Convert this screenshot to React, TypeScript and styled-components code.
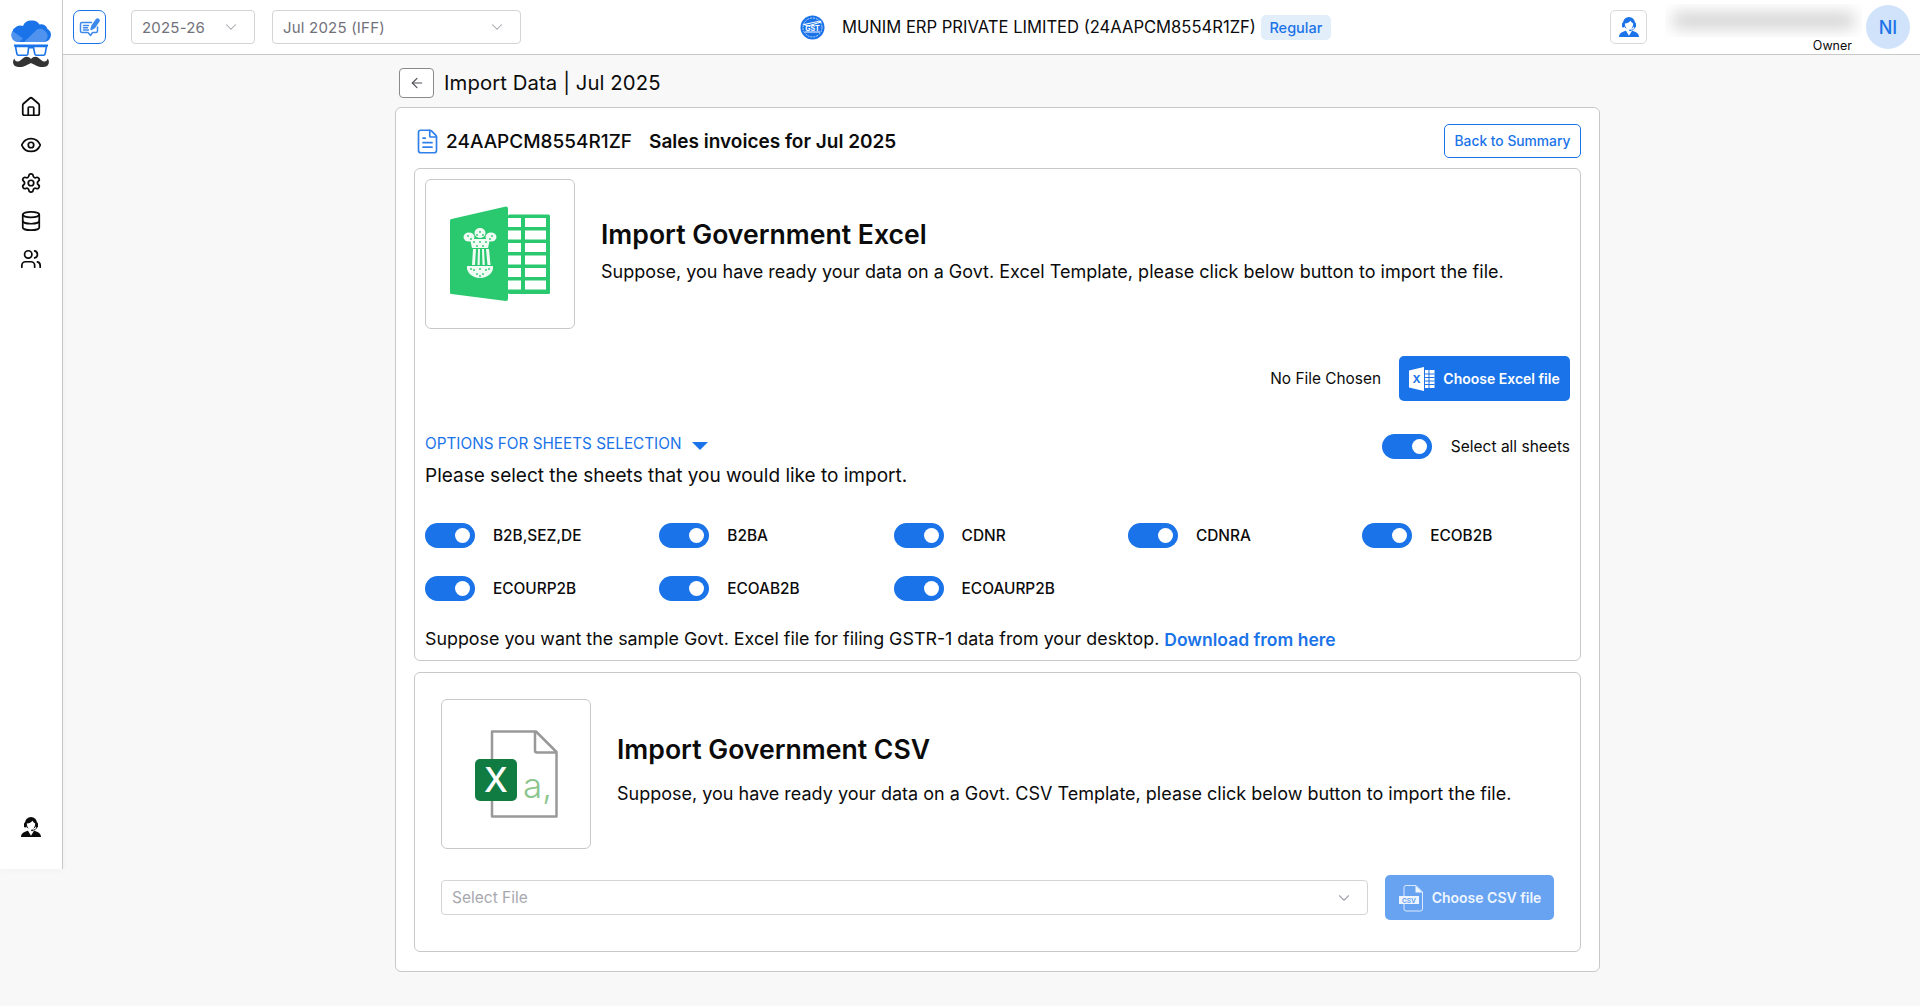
import React from "react";
import styled, { createGlobalStyle } from "styled-components";
import { House, Eye, Settings, Database, Users, FileText, ArrowLeft, ChevronDown } from "lucide-react";

const Global = createGlobalStyle`
  html, body { margin: 0; padding: 0; background: #f8f8f8; }
  body { font-family: Inter, "Liberation Sans", sans-serif; color: #0b0b0b; }
  * { box-sizing: border-box; }
`;

const Page = styled.div`
  display: flex;
  align-items: flex-start;
  width: 1920px;
  height: 1006px;
  overflow: hidden;
`;

const Sidebar = styled.aside`
  width: 63px;
  height: 869px;
  flex: none;
  background: #fff;
  border-right: 1px solid #c8c8c8;
  box-shadow: 0 0 8px rgba(0, 0, 0, 0.04);
  display: flex;
  flex-direction: column;
  align-items: center;
  padding: 20px 0 30px;
`;

const NavList = styled.nav`
  display: flex;
  flex-direction: column;
  align-items: center;
  gap: 16px;
  margin-top: 28px;
  flex: 1;
  color: #0b0b0b;
`;

const Main = styled.div`
  flex: 1;
  min-width: 0;
  display: flex;
  flex-direction: column;
`;

const Header = styled.header`
  height: 55px;
  background: #fff;
  border-bottom: 1px solid #c8c8c8;
  display: flex;
  align-items: center;
  padding: 0 10px;
`;

const IconButton = styled.button<{ $accent?: boolean }>`
  width: ${(p) => (p.$accent ? 33 : 37)}px;
  height: 34px;
  padding: 0;
  flex: none;
  background: #fff;
  border: 1px solid ${(p) => (p.$accent ? "#1a73e8" : "#d9d9de")};
  border-radius: ${(p) => (p.$accent ? 7 : 5)}px;
  display: flex;
  align-items: center;
  justify-content: center;
`;

const HeaderSelect = styled.div<{ $w: number; $ml: number }>`
  width: ${(p) => p.$w}px;
  margin-left: ${(p) => p.$ml}px;
  height: 34px;
  flex: none;
  border: 1px solid #d4d4d8;
  border-radius: 4px;
  display: flex;
  align-items: center;
  justify-content: space-between;
  padding: 0 14px 0 10px;
  font-size: 15px;
  letter-spacing: 0.2px;
  color: #71717a;
`;

const CompanyBlock = styled.div`
  display: flex;
  align-items: center;
  margin-left: 279px;
`;

const CompanyName = styled.span`
  font-size: 16.58px;
  margin-left: 17px;
  white-space: nowrap;
`;

const Badge = styled.span`
  margin-left: 5px;
  width: 70px;
  height: 25px;
  border-radius: 5px;
  background: #e3eefb;
  color: #1a73e8;
  font-size: 14.5px;
  font-weight: 500;
  display: flex;
  align-items: center;
  justify-content: center;
`;

const UserArea = styled.div`
  margin-left: auto;
  display: flex;
  align-items: center;
`;

const UserMeta = styled.div`
  width: 197px;
  margin-left: 18px;
  display: flex;
  flex-direction: column;
  align-items: flex-end;
  align-self: flex-start;
`;

const BlurBox = styled.div`
  width: 197px;
  height: 33px;
  margin-top: 2px;
  overflow: hidden;
  padding: 9px 8px;
`;

const BlurInner = styled.div`
  width: 100%;
  height: 15px;
  background: #cfcfcf;
  filter: blur(8px);
`;

const Role = styled.span`
  font-size: 12.5px;
  margin-top: 1px;
  padding-right: 10px;
`;

const Avatar = styled.div`
  width: 44px;
  height: 44px;
  margin-left: 4px;
  border-radius: 50%;
  background: #d1e3fa;
  color: #1a73e8;
  font-size: 18px;
  font-weight: 500;
  display: flex;
  align-items: center;
  justify-content: center;
`;

const Content = styled.main`
  width: 1205px;
  margin-left: 332px;
  display: flex;
  flex-direction: column;
`;

const TitleRow = styled.div`
  height: 52px;
  padding: 13px 0 0 4px;
  display: flex;
  align-items: flex-start;
`;

const BackButton = styled.button`
  width: 35px;
  height: 30px;
  padding: 0;
  background: #fff;
  border: 1px solid #8a8a8a;
  border-radius: 4px;
  display: flex;
  align-items: center;
  justify-content: center;
  color: #52525b;
`;

const PageTitle = styled.h1`
  margin: 0 0 0 10px;
  font-size: 20.3px;
  line-height: 30px;
  font-weight: 400;
  letter-spacing: 0.1px;
`;

const Card = styled.section`
  height: 865px;
  background: #fff;
  border: 1px solid #c8c8c8;
  border-radius: 6px;
  padding: 0 18px 0 18px;
  display: flex;
  flex-direction: column;
`;

const CardHead = styled.div`
  height: 60px;
  display: flex;
  align-items: center;
  padding-top: 6px;
`;

const Gstin = styled.span`
  font-size: 19px;
  font-weight: 500;
  margin-left: 5px;
`;

const CardTitle = styled.span`
  font-size: 19px;
  font-weight: 600;
  margin-left: 17px;
`;

const OutlineButton = styled.button`
  margin-left: auto;
  width: 137px;
  height: 34px;
  background: #fff;
  border: 1px solid #1a73e8;
  border-radius: 5px;
  color: #1a73e8;
  font: 500 13.8px Inter, sans-serif;
  padding: 0;
`;

const Panel = styled.div<{ $h: number; $mt?: number }>`
  height: ${(p) => p.$h}px;
  margin-top: ${(p) => p.$mt ?? 0}px;
  border: 1px solid #c8c8c8;
  border-radius: 6px;
  display: flex;
  flex-direction: column;
`;

const Intro = styled.div<{ $pad: string }>`
  display: flex;
  align-items: center;
  padding: ${(p) => p.$pad};
  gap: 26px;
`;

const IntroText = styled.div<{ $paraGap: number; $bottom: number }>`
  padding-bottom: ${(p) => p.$bottom}px;
  & > p {
    margin-top: ${(p) => p.$paraGap}px;
  }
`;

const ImageBox = styled.div`
  width: 150px;
  height: 150px;
  flex: none;
  border: 1px solid #c8c8c8;
  border-radius: 6px;
  display: flex;
  align-items: center;
  justify-content: center;
`;

const Heading = styled.h2`
  margin: 0;
  font-size: 26.6px;
  line-height: 30px;
  font-weight: 600;
`;

const Para = styled.p`
  margin: 0;
  font-size: 18px;
  line-height: 24px;
  white-space: nowrap;
`;

const ChooseRow = styled.div`
  display: flex;
  justify-content: flex-end;
  align-items: center;
  gap: 18px;
  padding: 27px 10px 0 0;
  font-size: 15.4px;
`;

const FileButton = styled.button<{ $muted?: boolean; $w: number }>`
  width: ${(p) => p.$w}px;
  height: 45px;
  border: 0;
  border-radius: 5px;
  padding: 0;
  flex: none;
  background: ${(p) => (p.$muted ? "#68a3f2" : "#1a73e8")};
  color: ${(p) => (p.$muted ? "#eef5fe" : "#fff")};
  font: 600 14px Inter, sans-serif;
  display: flex;
  align-items: center;
  justify-content: center;
  gap: 8px;
`;

const OptionsHead = styled.div`
  display: flex;
  justify-content: space-between;
  align-items: center;
  padding: 24px 10px 0 10px;
  height: 66px;
`;

const OptionsLabel = styled.div`
  display: flex;
  align-items: center;
  gap: 11px;
  color: #1a73e8;
  font-size: 15.3px;
  margin-top: -6px;
`;

const Caret = styled.span`
  width: 0;
  height: 0;
  margin-top: 5px;
  border-left: 8.5px solid transparent;
  border-right: 8.5px solid transparent;
  border-top: 8.5px solid #1a73e8;
`;

const ToggleLabel = styled.label<{ $gap: number; $weight?: number; $size?: number }>`
  display: flex;
  align-items: center;
  gap: ${(p) => p.$gap}px;
  font-size: ${(p) => p.$size ?? 15.4}px;
  font-weight: ${(p) => p.$weight ?? 400};
`;

const Toggle = styled.span`
  width: 50px;
  height: 25px;
  flex: none;
  border-radius: 13px;
  background: #1a73e8;
  position: relative;
  &::after {
    content: "";
    position: absolute;
    right: 5px;
    top: 5px;
    width: 15px;
    height: 15px;
    border-radius: 50%;
    background: #fff;
  }
`;

const SheetIntro = styled.p`
  margin: -3px 0 0;
  padding: 0 0 0 10px;
  font-size: 19px;
  line-height: 24px;
`;

const SheetGrid = styled.div`
  display: grid;
  grid-template-columns: repeat(5, 234.3px);
  grid-auto-rows: 25px;
  row-gap: 28px;
  padding: 35px 0 0 10px;
`;

const SampleRow = styled.p`
  margin: 26px 0 0;
  padding-left: 10px;
  font-size: 17.85px;
  line-height: 24px;
  white-space: nowrap;
`;

const Link = styled.a`
  color: #1a73e8;
  font-size: 17.5px;
  font-weight: 600;
  margin-left: 5px;
  position: relative;
  top: 1px;
`;

const CsvActions = styled.div`
  display: flex;
  align-items: center;
  gap: 17px;
  padding: 26px 26px 0;
`;

const FileSelect = styled.div`
  flex: 1;
  height: 35px;
  border: 1px solid #d4d4d8;
  border-radius: 4px;
  display: flex;
  align-items: center;
  justify-content: space-between;
  padding: 0 14px 0 10px;
  color: #a8a8ae;
  font-size: 15.5px;
`;

const Logo = () => (
  <svg width="40" height="48" viewBox="0 0 40 48">
    <path d="M7 22h26a7 7 0 0 0 3.500-13 6.500 6.500 0 0 0-8-4.500A8.500 8.500 0 0 0 20 .5a8.500 8.500 0 0 0-8 5.500A7 7 0 0 0 7 22z" fill="#1a73e8" />
    <path d="M13 22 26 9.500a7 7 0 0 1 8 1.500 6.500 6.500 0 0 1-1 11z" fill="#4f93ee" />
    <path d="M1.500 11 12 18.500 8 22H7a7 7 0 0 1-5.500-11z" fill="#4f93ee" />
    <path d="M4.500 26.500h13.200l-.8 7.300a1.600 1.600 0 0 1-1.600 1.400H7.500a1.600 1.600 0 0 1-1.600-1.400zM22.300 26.500h13.200l-1.400 7.300a1.600 1.600 0 0 1-1.600 1.400h-7.100a1.600 1.600 0 0 1-1.600-1.400z" fill="#fff" stroke="#1a73e8" strokeWidth="1.600" />
    <path d="M3 25.500h34M17 27.500h6" stroke="#1a73e8" strokeWidth="2" />
    <path d="M20 39C18 36.500 15 36 13 37.500 10 39.500 8.500 42 6 41.500 4.500 41.200 3.500 40 3.500 38.500 1.500 40.500 1.500 44 4 46 7.500 48 13 47 16 45 18 43.800 19.500 43.200 20 43.200 20.500 43.200 22 43.800 24 45 27 47 32.500 48 36 46 38.500 44 38.500 40.500 36.500 38.500 36.500 40 35.500 41.200 34 41.500 31.500 42 30 39.500 27 37.500 25 36 22 36.500 20 39z" fill="#333" />
  </svg>
);

const NoteIcon = () => (
  <svg width="24" height="24" viewBox="0 0 24 24" fill="none" stroke="#3d8aec" strokeWidth="1.500" strokeLinejoin="round" strokeLinecap="round">
    <path d="M13.500 7.500H4a1.500 1.500 0 0 0-1.500 1.500v7A1.500 1.500 0 0 0 4 17.500h6l2.500 3 2-3h3.500A1.500 1.500 0 0 0 19.500 16v-4" />
    <path d="M5.500 10.500h5M5.500 12.800h4M5.500 15h5" />
    <path d="M13 14.500l1-3.500 4.500-6.500c.8-.8 3-.3 2.500 1.500l-4.500 6.500z" fill="#3d8aec" />
  </svg>
);

const Support = ({ color }: { color: string }) => (
  <svg width="24" height="24" viewBox="0 0 24 24" fill={color}>
    <circle cx="12" cy="8" r="6" />
    <rect x="5" y="7.500" width="2.400" height="5" rx="1.200" />
    <rect x="16.600" y="7.500" width="2.400" height="5" rx="1.200" />
    <path d="M7.800 8.500c2.500-.2 4.500-1 5.700-2.700.8 1.300 1.700 2.200 2.700 2.700 0 3-1.800 6-4.200 6s-4.200-3-4.200-6z" fill="#fff" />
    <path d="M17.800 12c-.3 2-2 3.300-4.600 3.300" fill="none" stroke={color} strokeWidth="0.900" />
    <circle cx="13" cy="15.300" r="0.900" />
    <path d="M9 15.800l3 5 3-5c3 .7 6.500 2 7 5.700v.5H2v-.5c.5-3.700 4-5 7-5.700z" />
  </svg>
);

const GstSeal = () => (
  <svg width="25" height="25" viewBox="0 0 25 25">
    <circle cx="12.500" cy="12.500" r="12" fill="#1a73e8" />
    <circle cx="12.500" cy="12.500" r="9.500" fill="none" stroke="#fff" strokeWidth="0.700" strokeDasharray="2 1" />
    <path d="M4 9.500 20 6l1 1-13 4zM5 17h15" stroke="#fff" strokeWidth="1.100" fill="none" />
    <text x="12.500" y="15.500" fontSize="7" fontWeight="700" fill="#fff" textAnchor="middle" fontFamily="Inter, sans-serif">GST</text>
  </svg>
);

const speckles = [
  [30, 26], [27, 29], [33, 29], [18, 30], [21, 33], [40, 33], [42, 30], [24, 36], [30, 36], [36, 36],
  [27, 40], [33, 40], [24, 64], [30, 63], [36, 64], [21, 63], [39, 63], [27, 68], [33, 68], [30, 70],
];

const Emblem = () => (
  <g fill="#fff" opacity="0.93">
    <ellipse cx="30" cy="27" rx="5.500" ry="5" />
    <ellipse cx="19" cy="31" rx="5.500" ry="4.500" />
    <ellipse cx="41" cy="31" rx="5.500" ry="4.500" />
    <path d="M20 33h20l-2 9H22z" />
    <path d="M23 43h3l-1 16h-3zM28 43h2l-.3 16h-2.200zM32 43h2l.8 16h-2.300zM36 43h3l1.500 16h-3z" />
    <path d="M17 60h26c1 6-5 12-13 12s-14-6-13-12z" />
    {speckles.map(([x, y]) => (
      <circle key={`${x}-${y}`} cx={x} cy={y} r="0.900" fill="#2ac86f" />
    ))}
  </g>
);

const GovExcel = () => (
  <svg width="100" height="96" viewBox="0 0 100 96">
    <rect x="58" y="8.500" width="42" height="79.500" rx="1.500" fill="#2ac86f" />
    <g fill="#fff">
      {[12, 24.5, 37, 49.5, 62, 74.5].map((y) => (
        <React.Fragment key={y}>
          <rect x="58" y={y} width="13" height="9" />
          <rect x="75" y={y} width="21" height="9" />
        </React.Fragment>
      ))}
    </g>
    <path d="M1.500 13 56 .5a2 2 0 0 1 2 2V93a2 2 0 0 1-2 2L1.500 88a1.500 1.500 0 0 1-1.500-1.500V14.500A1.500 1.500 0 0 1 1.500 13z" fill="#2ac86f" />
    <Emblem />
  </svg>
);

const CsvDoc = () => (
  <svg width="84" height="88" viewBox="0 0 84 88" fill="none">
    <path d="M18 1.500h44L82.500 22v64.500H18z" fill="#fff" stroke="#999" strokeWidth="2.500" strokeLinejoin="round" />
    <path d="M61 1.500v19a2 2 0 0 0 2 2h19" stroke="#999" strokeWidth="2.500" />
    <rect x="1" y="29" width="42" height="42" rx="5" fill="#107c41" />
    <text x="22" y="62" fontSize="34" fontWeight="500" textAnchor="middle" fill="#fff" fontFamily="Inter, sans-serif">X</text>
    <text x="49" y="68" fontSize="35" fontWeight="300" fill="#8cc68f" fontFamily="Inter, sans-serif">a,</text>
  </svg>
);

const ExcelGlyph = () => (
  <svg width="26" height="26" viewBox="0 0 26 26">
    <path d="M0 4.500 15 1v24L0 21.500z" fill="#fff" />
    <text x="7.500" y="17" fontSize="11" fontWeight="700" textAnchor="middle" fill="#1a73e8" fontFamily="Inter, sans-serif">X</text>
    <path d="M16 4h9.500v18H16z" fill="#fff" />
    <path d="M16 8h9.500M16 11.500h9.500M16 15h9.500M16 18.500h9.500M20 4v18" stroke="#1a73e8" strokeWidth="1" />
  </svg>
);

const CsvGlyph = () => (
  <svg width="26" height="28" viewBox="0 0 26 28" fill="none">
    <path d="M6 3.500a2 2 0 0 1 2-2h10l6.500 6.500v17a2 2 0 0 1-2 2H8a2 2 0 0 1-2-2z" stroke="#dbe9fc" strokeWidth="1" />
    <path d="M17.500 1.500 24.500 8.500h-7z" fill="#eef5fe" />
    <rect x="1" y="12" width="20" height="8" fill="#eef5fe" />
    <text x="11" y="18.500" fontSize="6.500" fontWeight="700" textAnchor="middle" fill="#68a3f2" fontFamily="Inter, sans-serif">CSV</text>
  </svg>
);

const sheets = ["B2B,SEZ,DE", "B2BA", "CDNR", "CDNRA", "ECOB2B", "ECOURP2B", "ECOAB2B", "ECOAURP2B"];

export default function App() {
  return (
    <Page>
      <Global />
      <Sidebar>
        <Logo />
        <NavList>
          <House size={22} strokeWidth={1.9} />
          <Eye size={22} strokeWidth={1.9} />
          <Settings size={22} strokeWidth={1.9} />
          <Database size={22} strokeWidth={1.9} />
          <Users size={22} strokeWidth={1.9} />
        </NavList>
        <Support color="#0b0b0b" />
      </Sidebar>
      <Main>
        <Header>
          <IconButton $accent>
            <NoteIcon />
          </IconButton>
          <HeaderSelect $w={124} $ml={25}>
            2025-26
            <ChevronDown size={18} color="#a1a1aa" strokeWidth={1.4} />
          </HeaderSelect>
          <HeaderSelect $w={249} $ml={17}>
            Jul 2025 (IFF)
            <ChevronDown size={18} color="#a1a1aa" strokeWidth={1.4} />
          </HeaderSelect>
          <CompanyBlock>
            <GstSeal />
            <CompanyName>MUNIM ERP PRIVATE LIMITED (24AAPCM8554R1ZF)</CompanyName>
            <Badge>Regular</Badge>
          </CompanyBlock>
          <UserArea>
            <IconButton>
              <Support color="#1a73e8" />
            </IconButton>
            <UserMeta>
              <BlurBox>
                <BlurInner />
              </BlurBox>
              <Role>Owner</Role>
            </UserMeta>
            <Avatar>NI</Avatar>
          </UserArea>
        </Header>
        <Content>
          <TitleRow>
            <BackButton>
              <ArrowLeft size={16} strokeWidth={1.8} />
            </BackButton>
            <PageTitle>Import Data | Jul 2025</PageTitle>
          </TitleRow>
          <Card>
            <CardHead>
              <FileText size={27} color="#2f80ea" strokeWidth={1.5} />
              <Gstin>24AAPCM8554R1ZF</Gstin>
              <CardTitle>Sales invoices for Jul 2025</CardTitle>
              <OutlineButton>Back to Summary</OutlineButton>
            </CardHead>
            <Panel $h={493}>
              <Intro $pad="10px 10px 0">
                <ImageBox>
                  <GovExcel />
                </ImageBox>
                <IntroText $paraGap={11} $bottom={5}>
                  <Heading>Import Government Excel</Heading>
                  <Para>Suppose, you have ready your data on a Govt. Excel Template, please click below button to import the file.</Para>
                </IntroText>
              </Intro>
              <ChooseRow>
                No File Chosen
                <FileButton $w={171}>
                  <ExcelGlyph />
                  Choose Excel file
                </FileButton>
              </ChooseRow>
              <OptionsHead>
                <OptionsLabel>
                  OPTIONS FOR SHEETS SELECTION
                  <Caret />
                </OptionsLabel>
                <ToggleLabel $gap={19} $size={15.5}>
                  <Toggle />
                  Select all sheets
                </ToggleLabel>
              </OptionsHead>
              <SheetIntro>Please select the sheets that you would like to import.</SheetIntro>
              <SheetGrid>
                {sheets.map((s) => (
                  <ToggleLabel key={s} $gap={18} $weight={500}>
                    <Toggle />
                    {s}
                  </ToggleLabel>
                ))}
              </SheetGrid>
              <SampleRow>
                Suppose you want the sample Govt. Excel file for filing GSTR-1 data from your desktop.
                <Link>Download from here</Link>
              </SampleRow>
            </Panel>
            <Panel $h={280} $mt={11}>
              <Intro $pad="26px 26px 0">
                <ImageBox>
                  <CsvDoc />
                </ImageBox>
                <IntroText $paraGap={18} $bottom={8}>
                  <Heading>Import Government CSV</Heading>
                  <Para>Suppose, you have ready your data on a Govt. CSV Template, please click below button to import the file.</Para>
                </IntroText>
              </Intro>
              <CsvActions>
                <FileSelect>
                  Select File
                  <ChevronDown size={18} color="#a1a1aa" strokeWidth={1.5} />
                </FileSelect>
                <FileButton $muted $w={169}>
                  <CsvGlyph />
                  Choose CSV file
                </FileButton>
              </CsvActions>
            </Panel>
          </Card>
        </Content>
      </Main>
    </Page>
  );
}
